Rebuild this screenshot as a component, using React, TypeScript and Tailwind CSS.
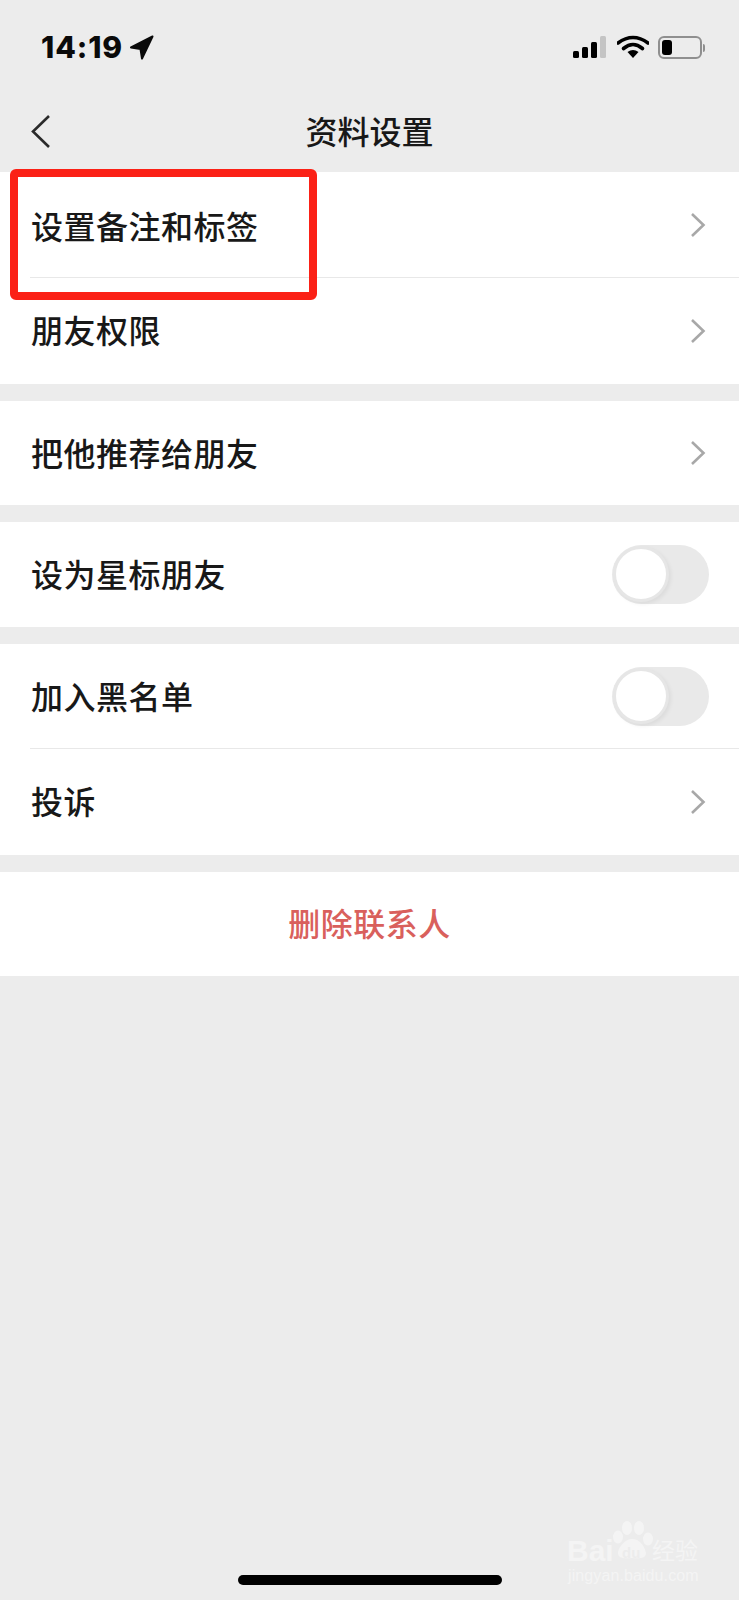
import React from "react";

const cjk = "font-['Noto_Sans_CJK_SC','Noto_Sans',sans-serif]";

function Chevron() {
  return (
    <svg width="16" height="26" viewBox="0 0 16 26" fill="none" className="shrink-0 mr-[3px]">
      <path d="M2 2 L13.5 13 L2 24" stroke="#a8a8a8" strokeWidth="2.6" />
    </svg>
  );
}

function Toggle() {
  return (
    <div className="relative w-[97px] h-[59px] rounded-full bg-[#e9e9e9] shrink-0">
      <div className="absolute left-[1px] top-[1px] w-[56px] h-[56px] rounded-full bg-white border-[3px] border-[#e6e6e6] shadow-[2px_2px_4px_rgba(0,0,0,0.06)]" />
    </div>
  );
}

function Row({ label, toggle, h = "h-[104px]", divider, shift = "-translate-y-[1px]" }: { label: string; toggle?: boolean; h?: string; divider?: boolean; shift?: string }) {
  return (
    <div className={`${h} pl-[31px] pr-[30px] relative flex items-center justify-between bg-white`}>
      <span className={`text-[32px] leading-none font-medium text-[#181818] tracking-[0.5px] ${shift}`}>{label}</span>
      {toggle ? <Toggle /> : <Chevron />}
      {divider && <div className="absolute left-[30px] right-0 bottom-0 h-px bg-[#e8e8e8]" />}
    </div>
  );
}

export default function App() {
  return (
    <div className={`relative w-[739px] h-[1600px] bg-[#ececec] overflow-hidden ${cjk}`}>
      {/* Status bar */}
      <div className="h-[94px] relative flex items-start justify-between pl-[41px] pr-[34px] pt-[29px]">
        <div className="flex items-center gap-[6px]">
          <span className="font-['Inter',sans-serif] font-extrabold text-[30px] leading-[36px] tracking-[0.9px] text-[#0a0a0a]">14:19</span>
          <svg width="25" height="25" viewBox="0 0 25 25">
            <path d="M23.5 1.5 L2 12.5 L11.5 14 L13 23.5 Z" fill="#0a0a0a" stroke="#0a0a0a" strokeWidth="2" strokeLinejoin="round" />
          </svg>
        </div>
        <div className="flex items-start gap-[10px] pt-[6px]">
          <div className="flex items-end gap-[3px] h-[22px] mt-[1px]">
            <div className="w-[6px] h-[7px] rounded-[1.5px] bg-black" />
            <div className="w-[6px] h-[11px] rounded-[1.5px] bg-black" />
            <div className="w-[6px] h-[16px] rounded-[1.5px] bg-black" />
            <div className="w-[6px] h-[22px] rounded-[1.5px] bg-[#c4c4c4]" />
          </div>
          <svg width="32" height="24" viewBox="0 0 32 24" className="ml-[1px]">
            <path d="M1 8 Q16 -3 31 8" stroke="#000" strokeWidth="3.6" fill="none" strokeLinecap="round" />
            <path d="M6.5 13.5 Q16 5.5 25.5 13.5" stroke="#000" strokeWidth="3.6" fill="none" strokeLinecap="round" />
            <path d="M10.5 17 Q16 13 21.5 17 L16 23 Z" fill="#000" />
          </svg>
          <div className="flex items-center gap-[1px] ml-[-1px] mt-[1px]">
            <div className="w-[44px] h-[23px] rounded-[6px] border-2 border-[#8f8f8f] p-[2px]">
              <div className="w-[10px] h-full rounded-[3px] bg-black" />
            </div>
            <div className="w-[2px] h-[8px] rounded-r-full bg-[#8f8f8f]" />
          </div>
        </div>
      </div>

      {/* Nav bar */}
      <div className="h-[78px] relative flex items-center justify-center">
        <svg width="22" height="36" viewBox="0 0 22 36" fill="none" className="absolute left-[30px] top-[20px]">
          <path d="M19 2 L3 17.5 L19 33" stroke="#2a2a2a" strokeWidth="2.6" />
        </svg>
        <span className="text-[32px] leading-none font-medium text-[#181818] -translate-y-[3px]">资料设置</span>
      </div>

      {/* Groups */}
      <div className="flex flex-col gap-[17px]">
        <div className="flex flex-col">
          <Row label="设置备注和标签" h="h-[106px]" divider shift="translate-y-[0px]" />
          <Row label="朋友权限" h="h-[106px]" shift="-translate-y-[2px]" />
        </div>
        <Row label="把他推荐给朋友" />
        <Row label="设为星标朋友" h="h-[105px]" toggle shift="-translate-y-[2px]" />
        <div className="flex flex-col">
          <Row label="加入黑名单" h="h-[105px]" toggle divider shift="-translate-y-[2px]" />
          <Row label="投诉" h="h-[106px]" shift="-translate-y-[2px]" />
        </div>
        <div className="h-[104px] flex items-center justify-center bg-white">
          <span className="text-[32px] leading-none font-medium text-[#d9605c] tracking-[0.5px] -translate-y-[2px]">删除联系人</span>
        </div>
      </div>

      {/* Red annotation */}
      <div className="absolute left-[10px] top-[169px] w-[307px] h-[131px] border-[8px] border-[#fb2116] rounded-[6px]" />

      {/* Home indicator */}
      <div className="absolute left-[238px] top-[1575px] w-[264px] h-[10px] rounded-full bg-black" />

      {/* Watermark */}
      <div className="absolute left-[567px] top-[1520px] w-[135px] h-[64px] text-[#f4f4f4]">
        <svg width="44" height="46" viewBox="0 0 44 46" className="absolute left-[43px] top-0" fill="#f4f4f4">
          <ellipse cx="8" cy="17" rx="5" ry="6.5" />
          <ellipse cx="17" cy="8" rx="5" ry="7" />
          <ellipse cx="29" cy="8" rx="5" ry="7" />
          <ellipse cx="38" cy="19" rx="5" ry="6.5" />
          <path d="M22 19 C30 19 35 27 36 33 C36 38 30 39 22 38 C14 39 7 38 8 32 C9 27 15 19 22 19 Z" />
        </svg>
        <span className="absolute left-0 top-[16px] font-['Liberation_Sans',sans-serif] font-bold text-[30px] leading-none">Bai</span>
        <span className="absolute left-[55px] top-[25px] font-['Liberation_Sans',sans-serif] font-bold text-[15px] leading-none text-[#ececec]">du</span>
        <span className="absolute left-[85px] top-[18px] text-[23px] leading-none whitespace-nowrap">经验</span>
        <span className="absolute left-[1px] top-[48px] font-['Liberation_Sans',sans-serif] text-[16px] leading-none tracking-[0.1px] whitespace-nowrap">jingyan.baidu.com</span>
      </div>
    </div>
  );
}
